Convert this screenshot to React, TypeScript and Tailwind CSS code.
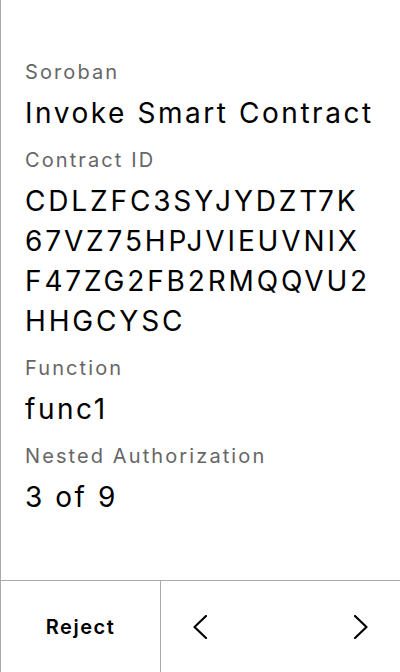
import { useState } from "react";

// --------
// --------

const CONTRACT_ID = "CDLZFC3SYJYDZT7K67VZ75HPJVIEUVNIXF47ZG2FB2RMQQVU2HHGCYSC";

const splitAt = (str: string, sizes: number[]) => {
  const out: string[] = [];
  let i = 0;
  for (const size of sizes) {
    out.push(str.slice(i, i + size));
    i += size;
  }
  if (i < str.length) out.push(str.slice(i));
  return out;
};

const Field = ({ label, children }: { label: string; children: any }) => {
  return (
    <div className="flex flex-col gap-[7px]">
      <p className="text-[20px] leading-7 tracking-[2.1px] text-[#666]">{label}</p>
      <div className="text-[28px] leading-10 tracking-[2.55px] text-black">{children}</div>
    </div>
  );
};

const Chevron = ({ dir }: { dir: "left" | "right" }) => (
  <svg width="14" height="24" viewBox="0 0 14 24" fill="none">
    <polyline
      points={dir === "left" ? "13,1 1.5,12 13,23" : "1,1 12.5,12 1,23"}
      stroke="#000"
      strokeWidth="2.2"
      strokeLinecap="round"
      strokeLinejoin="round"
    />
  </svg>
);

const App = () => {
  const [page, setPage] = useState(3);
  const total = 9;

  return (
    <div
      className="h-screen w-full flex flex-col bg-white border-l border-[#aaa]"
      style={{ fontFamily: "Inter, 'Liberation Sans', sans-serif" }}
    >
      <div className="flex-1 flex flex-col gap-[13px] px-6 pt-[58px]">
        <Field label="Soroban">Invoke Smart Contract</Field>
        <Field label="Contract ID">
          {splitAt(CONTRACT_ID, [16, 17, 16]).map((line) => (
            <span key={line} className="block tracking-[2.85px]">
              {line}
            </span>
          ))}
        </Field>
        <Field label="Function">func1</Field>
        <Field label="Nested Authorization">
          {page} of {total}
        </Field>
      </div>

      <div className="h-[92px] flex border-t border-[#aaa]">
        <button className="w-[160px] flex items-center justify-center border-r border-[#aaa] text-[20px] font-semibold tracking-[1.5px] text-black">
          Reject
        </button>
        <div className="flex-1 flex items-center justify-between px-8">
          <button onClick={() => setPage((p) => Math.max(1, p - 1))}>
            <Chevron dir="left" />
          </button>
          <button onClick={() => setPage((p) => Math.min(total, p + 1))}>
            <Chevron dir="right" />
          </button>
        </div>
      </div>
    </div>
  );
};

export default App;
